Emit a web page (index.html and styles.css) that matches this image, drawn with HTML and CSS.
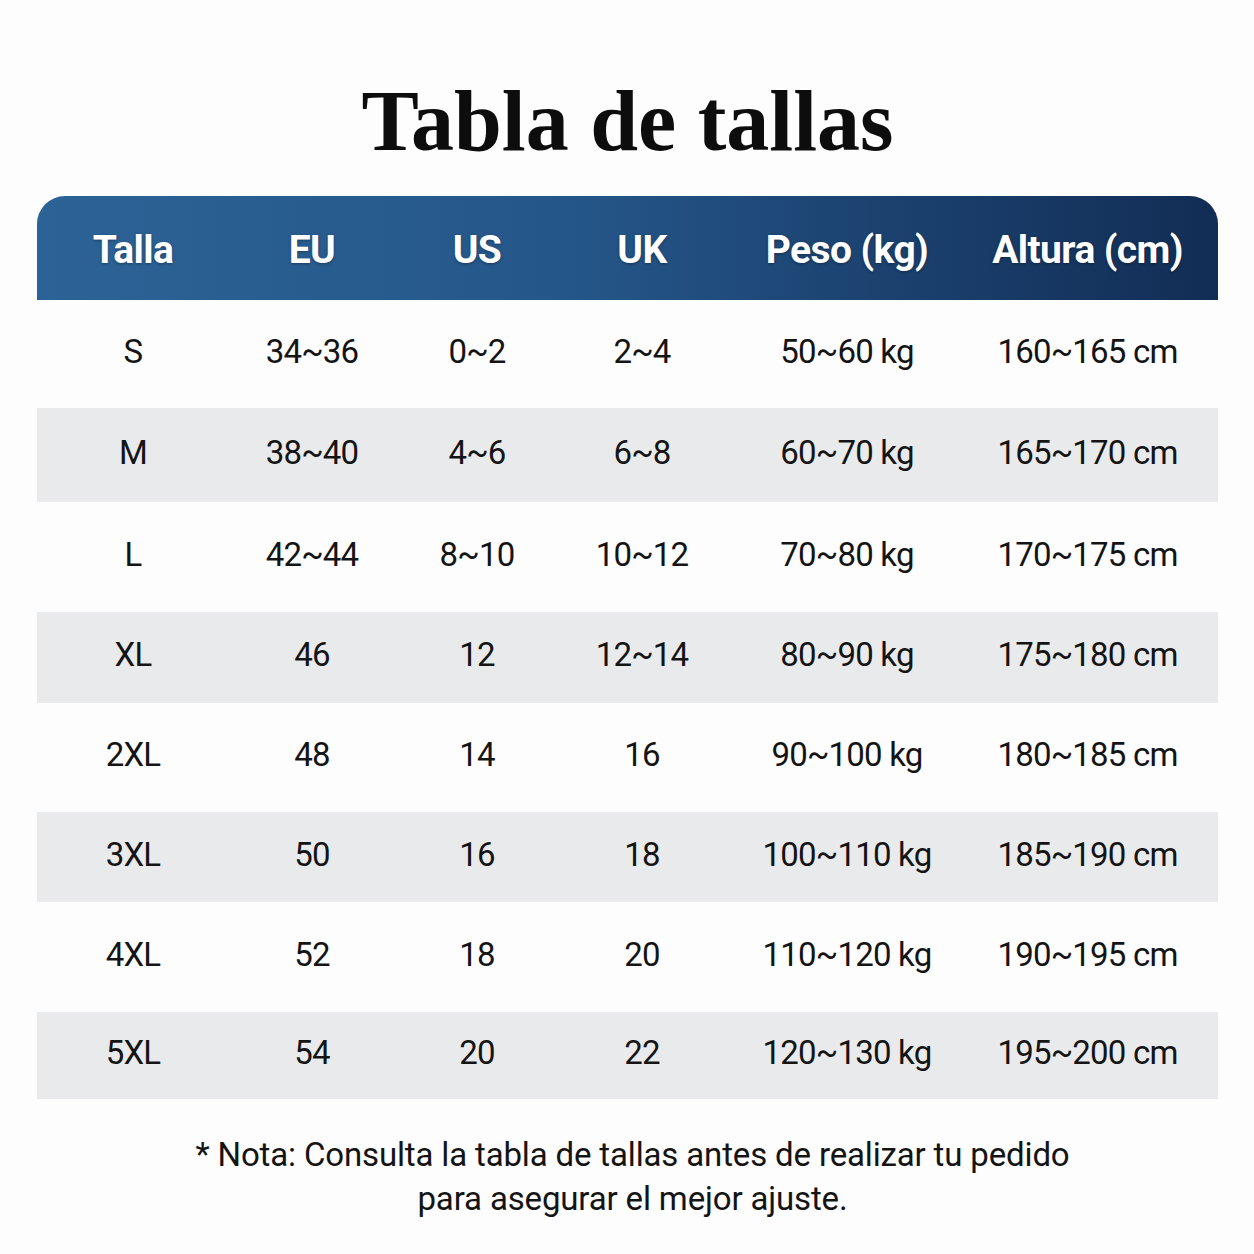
FILE: index.html
```html
<!DOCTYPE html>
<html lang="es">
<head>
<meta charset="utf-8">
<title>Tabla de tallas</title>
<link rel="stylesheet" href="styles.css">
</head>
<body>
<main class="page">
  <h1 class="title">Tabla de tallas</h1>
  <div class="table">
    <div class="row head">
      <div>Talla</div><div>EU</div><div>US</div><div>UK</div><div>Peso (kg)</div><div>Altura (cm)</div>
    </div>
    <div class="row r1"><div>S</div><div>34~36</div><div>0~2</div><div>2~4</div><div>50~60 kg</div><div>160~165 cm</div></div>
    <div class="row r2 alt"><div>M</div><div>38~40</div><div>4~6</div><div>6~8</div><div>60~70 kg</div><div>165~170 cm</div></div>
    <div class="row r3"><div>L</div><div>42~44</div><div>8~10</div><div>10~12</div><div>70~80 kg</div><div>170~175 cm</div></div>
    <div class="row r4 alt"><div>XL</div><div>46</div><div>12</div><div>12~14</div><div>80~90 kg</div><div>175~180 cm</div></div>
    <div class="row r5"><div>2XL</div><div>48</div><div>14</div><div>16</div><div>90~100 kg</div><div>180~185 cm</div></div>
    <div class="row r6 alt"><div>3XL</div><div>50</div><div>16</div><div>18</div><div>100~110 kg</div><div>185~190 cm</div></div>
    <div class="row r7"><div>4XL</div><div>52</div><div>18</div><div>20</div><div>110~120 kg</div><div>190~195 cm</div></div>
    <div class="row r8 alt"><div>5XL</div><div>54</div><div>20</div><div>22</div><div>120~130 kg</div><div>195~200 cm</div></div>
  </div>
  <p class="note">* Nota: Consulta la tabla de tallas antes de realizar tu pedido<br>para asegurar el mejor ajuste.</p>
</main>
</body>
</html>
```
FILE: styles.css
```css
html, body {
  margin: 0;
  padding: 0;
  background: #fdfdfd;
}
.page {
  width: 1254px;
  height: 1254px;
  box-sizing: border-box;
  padding: 71px 36px 0 37px;
  display: flex;
  flex-direction: column;
  align-items: center;
}
.title {
  margin: 0;
  font-family: "Liberation Serif", "Times New Roman", serif;
  font-weight: 700;
  font-size: 86px;
  line-height: 100px;
  color: #0d0d0d;
}
.table {
  margin-top: 25px;
  width: 1181px;
  display: flex;
  flex-direction: column;
}
.row {
  display: grid;
  grid-template-columns: 192px 166px 164px 166px 244px 237px;
  padding-right: 12px;
  align-items: center;
  height: 100px;
  font-family: Roboto, "Liberation Sans", sans-serif;
  font-size: 33px;
  color: #141414;
  text-align: center;
}
.row > div {
  letter-spacing: -0.8px;
  position: relative;
  top: -3px;
}
.head {
  height: 104px;
  border-radius: 28px 28px 0 0;
  background: linear-gradient(90deg, #2c6396 0%, #255689 45%, #1a3f6c 75%, #122d55 100%);
  color: #ffffff;
  font-weight: 700;
  font-size: 39px;
  text-shadow: 0 1px 3px rgba(0, 0, 0, 0.35);
}
.head > div {
  letter-spacing: -0.6px;
  top: 2px;
}
.r1 { height: 108px; }
.r2 { height: 94px; }
.r3 { height: 110px; }
.r4 { height: 91px; }
.r5 { height: 109px; }
.r6 { height: 90px; }
.r7 { height: 110px; }
.r8 { height: 87px; }
.alt {
  background: #e9eaec;
}
.note {
  margin: 34px 0 0 10px;
  font-family: Roboto, "Liberation Sans", sans-serif;
  font-size: 33px;
  line-height: 44px;
  color: #141414;
  text-align: center;
  letter-spacing: -0.15px;
}
```
